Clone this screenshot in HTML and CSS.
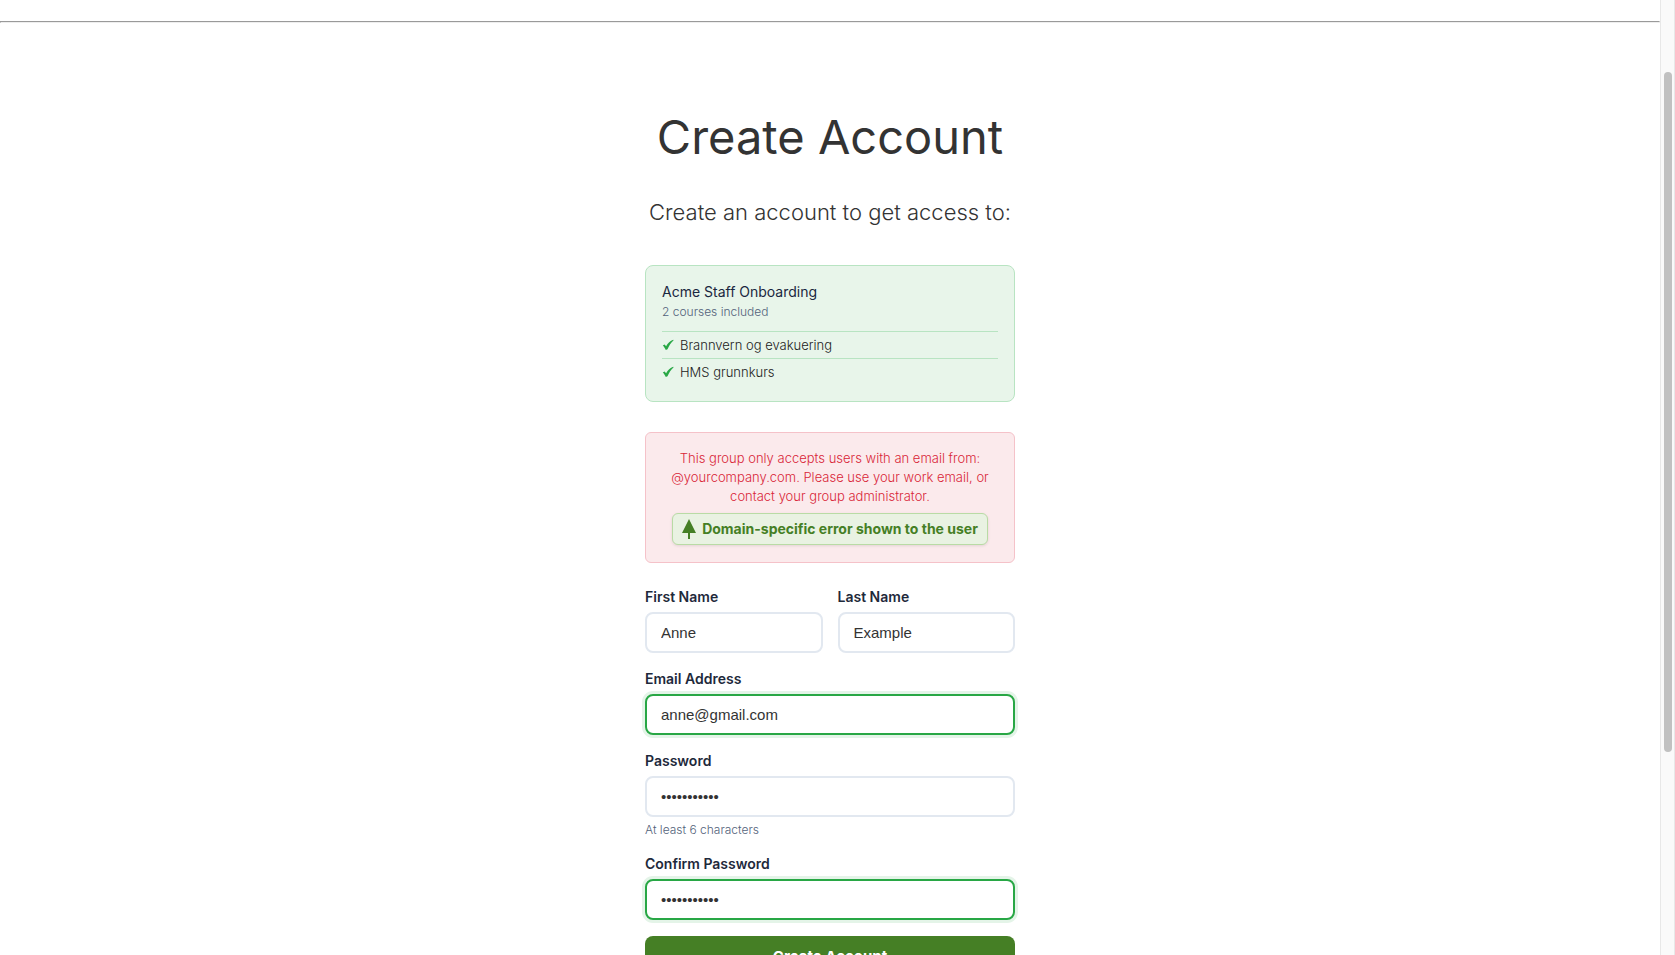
FILE: index.html
```html
<!DOCTYPE html>
<html lang="en">
<head>
<meta charset="utf-8">
<title>Create Account</title>
<link rel="stylesheet" href="styles.css">
</head>
<body class="page">
<div class="content">
  <hr class="rule">
  <main class="signup">
    <h1 class="title">Create Account</h1>
    <p class="subtitle">Create an account to get access to:</p>
    <section class="group">
      <h2 class="group-name">Acme Staff Onboarding</h2>
      <p class="group-count">2 courses included</p>
      <ul class="courses">
        <li class="course"><svg class="check" viewBox="0 0 12 12" aria-hidden="true"><path d="M.8 6.400 2.600 5.400 4.100 7.200C5.800 4.300 8.200 1.800 11.300.8L11.500 1.400C9 3.500 7.100 6.500 5.500 10.200L3.800 10.900C3 9.300 2.200 7.800.8 6.400Z"/></svg>Brannvern og evakuering</li>
        <li class="course"><svg class="check" viewBox="0 0 12 12" aria-hidden="true"><path d="M.8 6.400 2.600 5.400 4.100 7.200C5.800 4.300 8.200 1.800 11.300.8L11.500 1.400C9 3.500 7.100 6.500 5.500 10.200L3.800 10.900C3 9.300 2.200 7.800.8 6.400Z"/></svg>HMS grunnkurs</li>
      </ul>
    </section>
    <section class="alert" role="alert">
      <p class="alert-text">This group only accepts users with an email from:<br>@yourcompany.com. Please use your work email, or<br>contact your group administrator.</p>
      <div class="note"><svg class="tree" viewBox="0 0 14 20" aria-hidden="true"><path d="M7 0 14 14H8V20H6V14H0Z"/></svg>Domain-specific error shown to the user</div>
    </section>
    <form class="form">
      <div class="names">
        <div class="field"><label class="label" for="first">First Name</label><input class="input" id="first" type="text" value="Anne"></div>
        <div class="field"><label class="label" for="last">Last Name</label><input class="input" id="last" type="text" value="Example"></div>
      </div>
      <div class="field"><label class="label" for="email">Email Address</label><input class="input input-active" id="email" type="email" value="anne@gmail.com"></div>
      <div class="field"><label class="label" for="password">Password</label><input class="input" id="password" type="password" value="abcdefghijk"><p class="hint">At least 6 characters</p></div>
      <div class="field"><label class="label" for="confirm">Confirm Password</label><input class="input input-active" id="confirm" type="password" value="abcdefghijk"></div>
      <button class="submit" type="submit">Create Account</button>
    </form>
  </main>
</div>
<div class="scrollbar" aria-hidden="true"><div class="thumb"></div></div>
</body>
</html>
```
FILE: styles.css
```css
* { box-sizing: border-box; }
.page {
  margin: 0;
  height: 100vh;
  display: flex;
  overflow: hidden;
  background: #fff;
  color: #333;
  font-family: Inter, "Liberation Sans", sans-serif;
  font-weight: 300;
}
.content { flex: 1; min-width: 0; }
.rule { margin: 21px 0 0; border: 1px solid; border-color: #9a9a9a #eee #eee #9a9a9a; }
.signup { width: 100%; max-width: 370px; margin: 0 auto; padding-top: 84px; }
.title { margin: 0; font-size: 47px; line-height: 60px; font-weight: 400; text-align: center; white-space: nowrap; }
.subtitle { margin: 30px 0 38px; font-size: 22px; line-height: 30px; text-align: center; white-space: nowrap; }
.group { padding: 16px; border: 1px solid #b8e4c2; border-radius: 8px; background: #e8f5ea; }
.group-name { margin: 0; font-size: 14px; line-height: 20px; font-weight: 400; color: #1a2740; }
.group-count { margin: 0; font-size: 12px; line-height: 20px; color: #53627a; }
.courses { list-style: none; margin: 9px 0 0; padding: 0; }
.course { display: flex; align-items: center; gap: 6px; height: 27px; border-top: 1px solid #b8e4c2; font-size: 13px; line-height: 20px; color: #222; }
.check { width: 12px; height: 12px; fill: #28a745; }
.alert { margin-top: 30px; padding: 16px 16px 17px; border: 1px solid #f5c2c9; border-radius: 6px; background: #fbeaec; text-align: center; }
.alert-text { margin: 0 0 7px; font-size: 13px; line-height: 19px; color: #d92638; white-space: nowrap; }
.note {
  display: inline-flex; align-items: center; gap: 6px; height: 32px; padding: 0 9px;
  border: 1px solid #b9dba5; border-radius: 6px; background: #e9f2e2; color: #457f25;
  box-shadow: 0 1px 3px rgba(0, 0, 0, .1);
  font-size: 14px; line-height: 20px; font-weight: 700; white-space: nowrap; vertical-align: top;
}
.tree { width: 14px; height: 20px; fill: #457f25; }
.form { display: flex; flex-direction: column; gap: 16px; margin-top: 24px; }
.names { display: grid; grid-template-columns: 1fr 1fr; gap: 15px; }
.field { display: flex; flex-direction: column; gap: 5px; min-width: 0; }
.label { font-size: 14px; line-height: 20px; font-weight: 600; color: #1e293b; }
.input {
  width: 100%; height: 41px; padding: 0 14px; border: 2px solid #e2e8f0; border-radius: 8px;
  background: #fff; color: #333; font-family: "Liberation Sans", Arial, sans-serif; font-size: 15px; outline: none;
}
.input-active { border-color: #28a745; box-shadow: 0 0 0 3px #e4f4e8; }
.hint { margin: 0; font-size: 12px; line-height: 16px; color: #53627a; }
.submit { height: 41px; padding: 0; border: 0; border-radius: 8px; background: #457f25; color: #fff; font-family: inherit; font-size: 15px; font-weight: 700; }
.scrollbar { width: 15px; padding: 72px 2px 0 3px; border: 1px solid #e8e8e8; border-width: 0 1px; background: #fafafa; }
.thumb { height: 77%; border-radius: 4px; background: #c1c1c1; }
```
